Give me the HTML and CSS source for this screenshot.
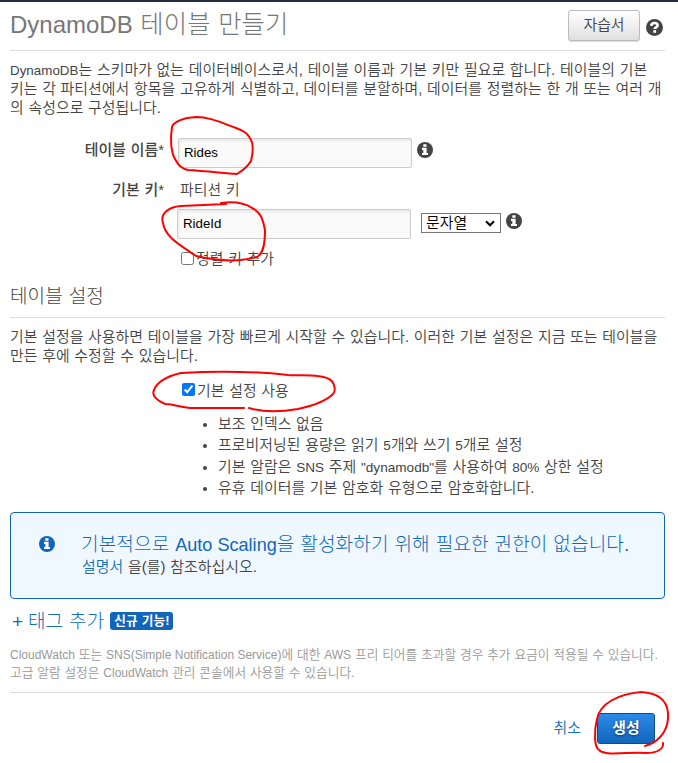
FILE: index.html
```html
<!DOCTYPE html>
<html lang="ko">
<head>
<meta charset="utf-8">
<title>DynamoDB 테이블 만들기</title>
<link rel="stylesheet" href="styles.css">
</head>
<body>
<svg class="defs" aria-hidden="true">
  <symbol id="info" viewBox="0 0 16 16"><circle cx="8" cy="8" r="8" fill="currentColor"/><path d="M6.3 2.3h3.2v2.5H6.3zM5 5.8h4.6v5.2h1.4v2.1H5V11h1.3V7.9H5z" fill="#fff"/></symbol>
  <symbol id="help" viewBox="0 0 16 16"><circle cx="8" cy="8" r="8" fill="currentColor"/><path d="M5 6.5c.1-1.8 1.2-2.7 2.9-2.7 1.8 0 3 .9 3 2.3 0 1.8-2.7 1.6-2.7 3.4" fill="none" stroke="#fff" stroke-width="2.5"/><path d="M6.9 10.5h2.6v2.5H6.9z" fill="#fff"/></symbol>
</svg>
<main class="page">
  <header class="header">
    <h1><span class="latin">DynamoDB</span> 테이블 만들기</h1>
    <button class="btn tutorial">자습서</button>
    <svg class="icon help"><use href="#help"/></svg>
  </header>
  <p class="intro"><span class="latin">DynamoDB</span>는 스키마가 없는 데이터베이스로서, 테이블 이름과 기본 키만 필요로 합니다. 테이블의 기본<br>키는 각 파티션에서 항목을 고유하게 식별하고, 데이터를 분할하며, 데이터를 정렬하는 한 개 또는 여러 개<br>의 속성으로 구성됩니다.</p>
  <form class="form">
    <div class="row name-row">
      <label class="label">테이블 이름*</label>
      <input class="field" type="text" value="Rides">
      <svg class="icon"><use href="#info"/></svg>
    </div>
    <div class="row key-row">
      <label class="label">기본 키*</label>
      <span class="key-type">파티션 키</span>
    </div>
    <div class="row id-row">
      <input class="field" type="text" value="RideId">
      <div class="select"><span>문자열</span><svg viewBox="0 0 10 7"><path d="M1 1.3l4 4 4-4" fill="none" stroke="#000" stroke-width="2"/></svg></div>
      <svg class="icon"><use href="#info"/></svg>
    </div>
    <label class="row sort-row"><input type="checkbox"><span>정렬 키 추가</span></label>
  </form>
  <h2>테이블 설정</h2>
  <p class="settings">기본 설정을 사용하면 테이블을 가장 빠르게 시작할 수 있습니다. 이러한 기본 설정은 지금 또는 테이블을<br>만든 후에 수정할 수 있습니다.</p>
  <label class="row default-row"><input type="checkbox" checked><span>기본 설정 사용</span></label>
  <ul class="defaults">
    <li>보조 인덱스 없음</li>
    <li>프로비저닝된 용량은 읽기 <span class="latin">5</span>개와 쓰기 <span class="latin">5</span>개로 설정</li>
    <li>기본 알람은 <span class="latin">SNS</span> 주제 <span class="latin">"dynamodb"</span>를 사용하여 <span class="latin">80%</span> 상한 설정</li>
    <li>유휴 데이터를 기본 암호화 유형으로 암호화합니다.</li>
  </ul>
  <section class="alert">
    <svg class="icon"><use href="#info"/></svg>
    <div>
      <h3>기본적으로 <span class="latin">Auto Scaling</span>을 활성화하기 위해 필요한 권한이 없습니다.</h3>
      <p><a>설명서</a> 을(를) 참조하십시오.</p>
    </div>
  </section>
  <div class="tags"><span class="plus">+</span><a>태그 추가</a><span class="badge">신규 기능!</span></div>
  <p class="note"><span class="latin">CloudWatch</span> 또는 <span class="latin">SNS(Simple Notification Service)</span>에 대한 <span class="latin">AWS</span> 프리 티어를 초과할 경우 추가 요금이 적용될 수 있습니다.<br>고급 알람 설정은 <span class="latin">CloudWatch</span> 관리 콘솔에서 사용할 수 있습니다.</p>
  <footer class="footer"><a>취소</a><button class="btn create">생성</button></footer>
</main>
<svg class="marks" viewBox="0 0 678 763" aria-hidden="true">
  <path d="M187 118C179 120 173 123 172 127C170 139 171 152 175 159C178 165 182 169 188 170C205 171 223 173 237 174C242 171 248 166 251 161C253 153 254 144 250 138C247 133 244 131 236 128C222 123 210 117 196 117Z"/>
  <path d="M226 204L181 206C168 207 160 214 163 223C165 237 180 245 196 256C218 261 240 262 257 257C264 253 265 242 265 230C263 221 262 213 252 208C246 204 236 201 221 203"/>
  <path d="M244 408L190 408C176 406 171 404 165 404C158 401 151 396 154 390C157 382 168 376 181 373C213 371 251 371 288 375C302 376 320 374 329 379C335 382 336 391 333 394C326 401 312 406 298 409C281 412 262 412 249 408"/>
  <path d="M645 746C663 741 669 726 668 713C667 700 657 693 641 692C619 694 600 703 597 719C594 731 594 747 599 750C606 757 632 751 646 753C657 753 664 749 663 743"/>
</svg>
</body>
</html>
```

FILE: styles.css
```css
* { box-sizing: border-box; }
body {
  margin: 0;
  background: #fff;
  color: #444;
  font: 350 14.9px/19px "Liberation Sans", "Noto Sans CJK KR", sans-serif;
  word-spacing: 0.5px;
  letter-spacing: 0.05px;
}
h1, h2, h3, p, ul { margin: 0; font-weight: 350; }
h1, h2, h3, .tags { font-weight: 300; }
a { color: #146eb4; }
.latin { font-size: 13.4px; letter-spacing: 0; word-spacing: 0; }
.defs { display: none; }
.page {
  height: 763px;
  padding: 0 13px 0 10px;
  border-top: 2px solid #232f3e;
  overflow: hidden;
  white-space: nowrap;
}
.icon { width: 16px; height: 16px; color: #444; flex: none; }
.header {
  display: flex;
  align-items: flex-start;
  height: 49px;
  border-bottom: 1px solid #ddd;
}
h1 { flex: 1; padding-top: 7px; font-size: 25.4px; line-height: 30px; color: #777; }
h1 .latin { font-size: 24px; }
.btn { font: inherit; border-radius: 3px; padding: 0; }
.tutorial {
  width: 72px;
  height: 31px;
  margin-top: 8px;
  border: 1px solid #bbb;
  background: linear-gradient(#fff, #e0e0e0);
  color: #444;
  box-shadow: 0 1px 1px #ddd;
}
.help { width: 17px; height: 17px; margin: 17px 2px 0 6px; }
.intro { margin-top: 10px; }
.form { margin-top: 20px; }
.row { display: flex; }
.label { width: 154px; text-align: right; font-weight: 500; }
.field {
  width: 234px;
  height: 30px;
  padding: 0 6px 2px 5px;
  border: 1px solid #ccc;
  border-radius: 2px;
  background: #fafafa;
  box-shadow: inset 1px 2px 3px #e8e8e8;
  color: #000;
  font: 13.3px "Liberation Sans", sans-serif;
}
.name-row .label { padding-top: 3px; }
.name-row .field { margin-left: 14px; }
.name-row .icon { margin: 4px 0 0 5px; }
.key-row { height: 41px; padding-top: 13px; }
.key-type { margin-left: 16px; }
.id-row { padding-left: 167px; }
.select {
  display: flex;
  align-items: center;
  justify-content: space-between;
  width: 80px;
  height: 20px;
  margin: 4px 0 0 10px;
  padding: 0 5px 0 4px;
  border: 1px solid #767676;
  color: #000;
}
.select svg { width: 10px; height: 7px; }
.id-row .icon { margin: 4px 0 0 5px; }
.row input[type="checkbox"] { width: 13px; height: 13px; margin: 3px 2px 0 0; }
.sort-row { height: 20px; margin-top: 10px; padding-left: 171px; }
.sort-row span { padding-top: 1px; }
h2 { height: 49px; padding-top: 18px; border-bottom: 1px solid #ddd; font-size: 19.1px; line-height: 20px; }
.settings { margin-top: 10px; }
.default-row { margin-top: 15px; padding-left: 172px; }
.default-row span { padding-top: 1px; }
.default-row input[type="checkbox"] { margin-top: 2px; }
.defaults { margin-top: 13px; padding-left: 208px; line-height: 21.3px; }
.defaults .latin { font-size: 13.6px; }
.alert {
  display: flex;
  height: 87px;
  margin-top: 13px;
  padding: 20px 28px;
  border: 1px solid #1166bb;
  border-radius: 4px;
  background: #f0f8ff;
}
.alert .icon { margin: 3px 26px 0 0; color: #1166bb; }
.alert h3 { color: #1166bb; font-size: 19.15px; line-height: 23px; }
h3 .latin { font-size: 18.1px; }
.alert p { padding-left: 1px; line-height: 21px; }
.tags { display: flex; align-items: center; height: 24px; margin-top: 10px; padding-left: 2px; font-size: 19.1px; color: #146eb4; }
.plus { width: 16px; }
.badge {
  width: 63px;
  height: 18px;
  margin-left: 6px;
  border-radius: 3px;
  background: #1166bb;
  color: #fff;
  font-size: 12.7px;
  line-height: 18px;
  font-weight: 700;
  text-align: center;
}
.note { margin-top: 13px; color: #999; font-size: 12.7px; line-height: 18px; letter-spacing: 0; word-spacing: 0.35px; }
.note .latin { font-size: 12px; }
.footer { display: flex; justify-content: flex-end; margin-top: 10px; padding: 20px 10px 0 0; border-top: 1px solid #ddd; }
.footer a { margin: 6px 16px 0 0; }
.create {
  width: 58px;
  height: 31px;
  border: 1px solid #0d4c8c;
  background: linear-gradient(#2c8aea, #1166bb);
  color: #fff;
  font-weight: 700;
  text-shadow: 0 1px 2px #053665;
}
.marks { position: absolute; top: 0; left: 0; width: 678px; height: 763px; pointer-events: none; }
.marks path { fill: none; stroke: #f00; stroke-width: 2; stroke-linecap: round; stroke-linejoin: round; }
```
